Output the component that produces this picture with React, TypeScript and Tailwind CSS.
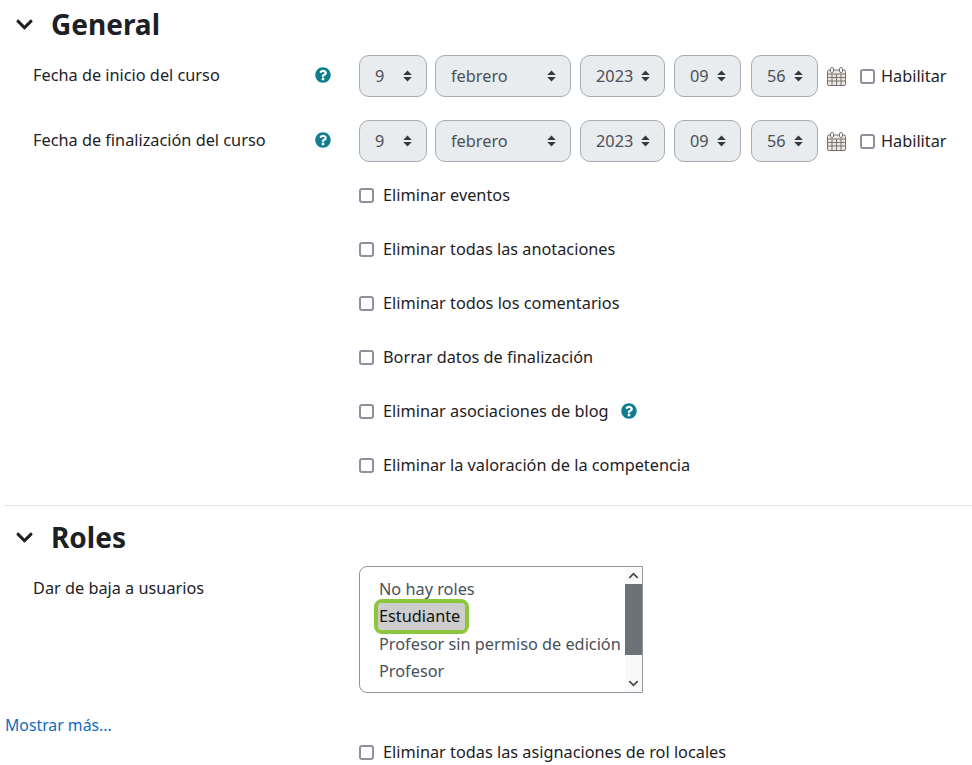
import { FaChevronDown, FaQuestionCircle, FaChevronUp } from 'react-icons/fa'

function CalendarIcon() {
  return (
    <svg width="19" height="19" viewBox="0 0 19 19" className="text-[#77706e]">
      <rect x="0.5" y="3" width="18" height="15.5" rx="1.5" fill="#efe9e2" stroke="currentColor" />
      <path d="M1 7h17M1 10.5h17M1 14h17M5 7v11M9.5 7v11M14 7v11" stroke="currentColor" strokeWidth="1" fill="none" />
      <rect x="3.5" y="0.5" width="3" height="5" rx="1.4" fill="#fff" stroke="currentColor" />
      <rect x="12.5" y="0.5" width="3" height="5" rx="1.4" fill="#fff" stroke="currentColor" />
    </svg>
  )
}

function SortIcon() {
  return (
    <svg width="9" height="12" viewBox="0 0 9 12" className="text-[#343a40]">
      <path d="M4.5 0.5L8.8 5H0.2ZM4.5 11.5L0.2 7H8.8Z" fill="currentColor" />
    </svg>
  )
}

function HelpIcon() {
  return <FaQuestionCircle className="text-[#0f7c90] text-[16px]" />
}

function Check({ label, help }: { label: string; help?: boolean }) {
  return (
    <div className="h-[54px] flex items-center pl-[359px]">
      <span className="w-[15px] h-[15px] border-2 border-[#8f8f9d] rounded-[3px] bg-white"></span>
      <span className="ml-[9px]">{label}</span>
      {help && (
        <span className="ml-[12px]">
          <HelpIcon />
        </span>
      )}
    </div>
  )
}

function Select({ value, width, gap }: { value: string; width: string; gap: string }) {
  return (
    <div
      className={`${width} ${gap} h-[42px] bg-[#e9ecef] border border-[#a5abb0] rounded-[10px] flex items-center justify-between pl-[15px] pr-[14px] text-[#495057]`}
    >
      <span>{value}</span>
      <SortIcon />
    </div>
  )
}

function DateRow({ label }: { label: string }) {
  return (
    <div className="flex h-[42px] mb-[23px]">
      <div className="w-[315px] pl-[33px] pt-[8px] shrink-0">{label}</div>
      <div className="w-[44px] pt-[12px] shrink-0">
        <HelpIcon />
      </div>
      <div className="flex items-center">
        <Select value="9" width="w-[68px]" gap="mr-[8px]" />
        <Select value="febrero" width="w-[136px]" gap="mr-[9px]" />
        <Select value="2023" width="w-[85px]" gap="mr-[9px]" />
        <Select value="09" width="w-[67px]" gap="mr-[10px]" />
        <Select value="56" width="w-[67px]" gap="mr-[9px]" />
        <CalendarIcon />
        <span className="ml-[14px] w-[15px] h-[15px] border-2 border-[#8f8f9d] rounded-[3px] bg-white"></span>
        <span className="ml-[6px] text-[#1d2125]">Habilitar</span>
      </div>
    </div>
  )
}

function SectionHeader({ title }: { title: string }) {
  return (
    <div className="flex items-center h-[40px] pl-[15px]">
      <span className="w-[36px]">
        <FaChevronDown className="text-[#1d2125] text-[19px]" />
      </span>
      <h3 className="text-[28px] font-bold leading-none text-[#1d2125]">{title}</h3>
    </div>
  )
}

export default function App() {
  return (
    <div className="w-[972px] h-[765px] overflow-hidden bg-white text-[#1d2125] text-[16.3px] leading-[24px] font-['Noto_Sans','Open_Sans',sans-serif]">
      <div className="pt-[4px]">
        <SectionHeader title="General" />
      </div>
      {/* Date rows */}
      <div className="pt-[11px]">
        <DateRow label="Fecha de inicio del curso" />
        <DateRow label="Fecha de finalización del curso" />
      </div>
      <div className="-mt-[17px]">
        <Check label="Eliminar eventos" />
        <Check label="Eliminar todas las anotaciones" />
        <Check label="Eliminar todos los comentarios" />
        <Check label="Borrar datos de finalización" />
        <Check label="Eliminar asociaciones de blog" help />
        <Check label="Eliminar la valoración de la competencia" />
      </div>
      <div className="mt-[13px] ml-[4px] border-t border-[#e3e3e3]"></div>

      <div className="pt-[11px]">
        <SectionHeader title="Roles" />
      </div>
      <div className="flex mt-[9px]">
        <div className="w-[359px] pl-[33px] pt-[10px] shrink-0">Dar de baja a usuarios</div>
        <div className="w-[284px] h-[127px] border border-[#8f959b] rounded-l-[8px] flex text-[#495057]">
          <div className="flex-1 pl-[19px] pt-[8px]">
            <div className="h-[27.5px] flex items-center">No hay roles</div>
            <div className="h-[27.5px] flex items-center">
              <span className="bg-[#cdcdcd] text-[#111] px-[1px] -ml-[1px] h-[27px] leading-[27px] rounded-[4px] outline-[4px] outline-[#8cc63f] w-[87px]">Estudiante</span>
            </div>
            <div className="h-[27.5px] flex items-center whitespace-nowrap">Profesor sin permiso de edición</div>
            <div className="h-[27.5px] flex items-center">Profesor</div>
          </div>
          <div className="w-[17px] flex flex-col items-center justify-between bg-[#f8f9fb]">
            <div className="h-[17px] flex items-center"><FaChevronUp className="text-[#505050] text-[11px]" /></div>
            <div className="w-full h-[73px] bg-[#6a727a] mb-[20px]"></div>
            <div className="h-[17px] flex items-center"><FaChevronDown className="text-[#505050] text-[11px]" /></div>
          </div>
        </div>
      </div>
      <div className="pl-[5px] mt-[20px] h-[24px] text-[15.8px] text-[#0f6cbf]">Mostrar más...</div>
      <div>
        <div className="h-[30px] flex items-center pl-[359px]">
          <span className="w-[15px] h-[15px] border-2 border-[#8f8f9d] rounded-[3px] bg-white"></span>
          <span className="ml-[9px]">Eliminar todas las asignaciones de rol locales</span>
        </div>
      </div>
    </div>
  )
}
